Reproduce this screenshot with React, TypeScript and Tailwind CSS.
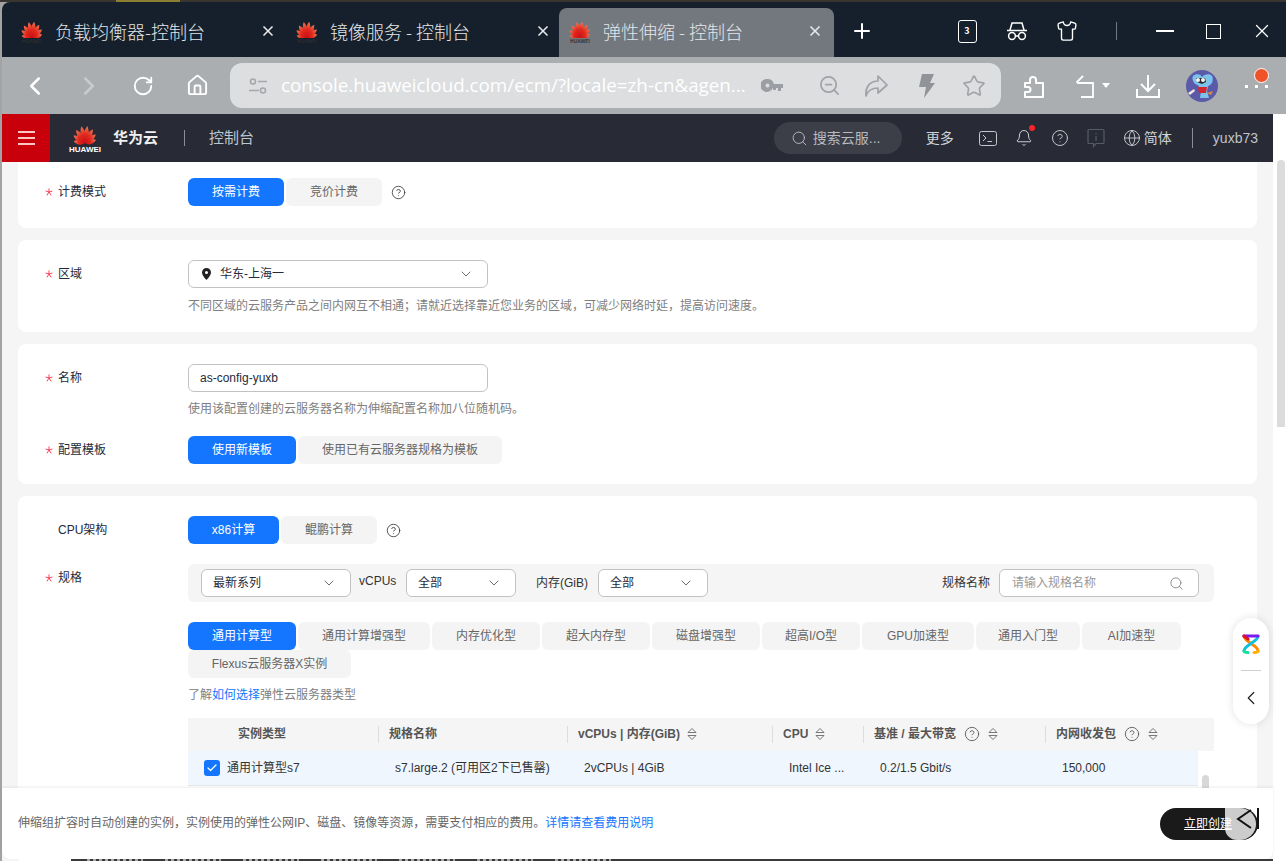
import React from "react";
import { Bell, CircleHelp, ChevronDown, ChevronLeft, ChevronRight, Globe, Home, Plus, RotateCw, Search, Shirt, Star, X, ZoomOut, Check } from "lucide-react";

// [angle, length scale] of each petal, outer ones are shorter
const PETALS: [number, number][] = [
  [-78, 0.76],
  [-54, 0.92],
  [-32, 1.05],
  [-10, 1.14],
  [10, 1.14],
  [32, 1.05],
  [54, 0.92],
  [78, 0.76],
];

function HuaweiMark({ size = 24, wordClass }: { size?: number; wordClass: string }) {
  return (
    <div className="flex flex-col items-center shrink-0">
      <svg width={size} height={size * 0.85} viewBox="-13 -18 26 22">
        <defs>
          <linearGradient id="petal" x1="0" y1="0" x2="0" y2="1">
            <stop offset="0" stopColor="#f47a55" />
            <stop offset="0.5" stopColor="#e0281e" />
            <stop offset="1" stopColor="#c90f12" />
          </linearGradient>
        </defs>
        {PETALS.map(([a, s]) => (
          <path
            key={a}
            d="M0 0C-3.800 -5 -3.600 -10 -.6 -15C2.600 -10 3.800 -5 0 0Z"
            fill="url(#petal)"
            transform={`translate(0 3) rotate(${a}) scale(1 ${s})`}
          />
        ))}
      </svg>
      <span className={wordClass}>HUAWEI</span>
    </div>
  );
}

function BrowserTab({ title, active, width, left, right }: { title: string; active?: boolean; width: string; left: string; right: string }) {
  return (
    <div className={`${width} ${left} h-full flex items-center pb-[3px] shrink-0 ${active ? "bg-[#73787f] rounded-t-[8px]" : ""}`}>
      <HuaweiMark size={24} wordClass={`text-[5px] leading-[6px] font-bold ${active ? "text-[#33363a]" : "text-[#2a2d31]"}`} />
      <span className="ml-[11px] text-[18px] text-[#e3e6e9] whitespace-pre flex-1">{title}</span>
      <X size={16} strokeWidth={2.5} className={`text-[#e8eaec] ${right}`} />
    </div>
  );
}

function Seg({ children, on, width }: { children: React.ReactNode; on?: boolean; width: string }) {
  return (
    <div className={`${width} h-[28px] flex items-center justify-center rounded-[6px] text-[12px] shrink-0 ${on ? "bg-[#1476ff] text-white" : "bg-[#f4f4f4] text-[#666666]"}`}>
      {children}
    </div>
  );
}

function FieldLabel({ text, star = true }: { text: string; star?: boolean }) {
  return (
    <div className="w-[170px] pl-[27px] shrink-0 flex items-center text-[12px] text-[#252b3a] h-[28px]">
      <span className="w-[13px] flex items-center">
        {star && (
          <svg width="8" height="8" viewBox="0 0 8 8" fill="none" stroke="#f0334a" strokeWidth="0.9">
            <path d="M4 .4V4M4 4L.6 3M4 4l3.400-1M4 4L1.900 7.400M4 4l2.100 3.400" />
          </svg>
        )}
      </span>
      {text}
    </div>
  );
}

function Sel({ text, width }: { text: string; width: string }) {
  return (
    <div className={`${width} h-[28px] bg-white border border-[#c2c2c2] rounded-[6px] flex items-center justify-between pl-[11px] pr-[13px] text-[12px] text-[#252b3a] shrink-0`}>
      <span>{text}</span>
      <ChevronDown size={16} strokeWidth={1.3} className="text-[#555555]" />
    </div>
  );
}

function Help({ size = 15, color = "text-[#333333]" }: { size?: number; color?: string }) {
  return <CircleHelp size={size} strokeWidth={1.3} className={`${color} shrink-0`} />;
}

function SortIcon() {
  return (
    <svg width="10" height="14" viewBox="0 0 10 14" className="shrink-0" fill="none" stroke="#777777" strokeWidth="1">
      <path d="M5 1.500L9 5.500H1Z" />
      <path d="M5 12.500L9 8.500H1Z" />
    </svg>
  );
}

function HeadCell({ children, width, pad = "pl-[11px]", sep = true }: { children: React.ReactNode; width: string; pad?: string; sep?: boolean }) {
  return (
    <div className={`${width} ${pad} h-full relative flex items-center pb-[1px] shrink-0 font-bold text-[12px] text-[#555555]`}>
      {sep && <span className="absolute left-0 top-[8px] bottom-[8px] w-px bg-[#dddddd]" />}
      {children}
    </div>
  );
}

function RowCell({ children, width }: { children: React.ReactNode; width: string }) {
  return <div className={`${width} pl-[17px] shrink-0 whitespace-pre`}>{children}</div>;
}

function Incognito() {
  return (
    <svg width="22" height="20" viewBox="0 0 22 20" fill="none" stroke="#fff" strokeWidth="1.5">
      <path d="M1 9.500h20M4 9l2-7h10l2 7" />
      <circle cx="6" cy="15" r="3.400" />
      <circle cx="16" cy="15" r="3.400" />
      <path d="M9.400 15h3.200" />
    </svg>
  );
}

function Avatar() {
  return (
    <svg width="32" height="32" viewBox="0 0 32 32" className="shrink-0">
      <circle cx="16" cy="16" r="16" fill="#5a5aa8" />
      <path d="M7 6c3-3 8-2 9 1 2-3 8-4 10-1 2 4 0 9-4 10l-1 5 2 7h-9l1-7-3-6C9 15 5 10 7 6Z" fill="#7cc3ec" />
      <path d="M10 8h9l1 4-4 2-5-2Z" fill="#2b2b33" />
      <circle cx="12" cy="10" r="2" fill="#f2f2f2" />
      <circle cx="17" cy="10" r="2" fill="#f2f2f2" />
      <path d="M12 17h9l-1 6h-7Z" fill="#d8262c" />
      <path d="M2 23l6-4 1 2-5 4Z" fill="#f1e7e0" />
      <path d="M21 23l6-2-2 4Z" fill="#e58a2a" />
    </svg>
  );
}

function ServiceLogo() {
  return (
    <svg width="18" height="20" viewBox="0 0 18 20" fill="none" strokeWidth="3" strokeLinecap="round">
      <path d="M2 2c0 6 14 9 14 15" stroke="#ff8a00" />
      <path d="M16 2c0 6-14 9-14 15" stroke="#10c0e0" />
      <path d="M2 2h14" stroke="#7a1cf0" />
      <path d="M2 2l4 3" stroke="#e0102f" />
      <path d="M2 17c0 1 1 1.500 4 1.500" stroke="#10e0a0" />
      <path d="M16 17c0 1-1 1.500-4 1.500" stroke="#ffb000" />
    </svg>
  );
}

const TYPES: [string, string][] = [
  ["通用计算型", "w-[108px]"],
  ["通用计算增强型", "w-[132px]"],
  ["内存优化型", "w-[108px]"],
  ["超大内存型", "w-[108px]"],
  ["磁盘增强型", "w-[108px]"],
  ["超高I/O型", "w-[98px]"],
  ["GPU加速型", "w-[112px]"],
  ["通用入门型", "w-[104px]"],
  ["AI加速型", "w-[99px]"],
  ["Flexus云服务器X实例", "w-[163px]"],
];

export default function App() {
  return (
    <div className="w-[1286px] h-[861px] relative overflow-hidden flex flex-col bg-[#a3a3a3] [font-family:'Liberation_Sans','Noto_Sans_CJK_SC',sans-serif]">
      <div className="h-[2px] bg-[#3a3530] shrink-0 flex">
        <span className="ml-[116px] w-[64px] bg-[#8a8030]" />
      </div>

      <div className="flex-1 min-h-0 ml-[2px] flex flex-col">
        {/* tabs */}
        <div className="h-[55px] bg-[#15202c] rounded-tl-[8px] pt-[6px] flex items-stretch shrink-0 [font-family:'Noto_Sans_CJK_SC',sans-serif] font-light">
          <BrowserTab title="负载均衡器-控制台" width="w-[275px]" left="pl-[18px]" right="mr-[1px]" />
          <BrowserTab title="镜像服务 - 控制台" width="w-[282px]" left="pl-[18px]" right="mr-[8px]" />
          <BrowserTab title="弹性伸缩 - 控制台" active width="w-[275px]" left="pl-[9px]" right="mr-[11px]" />
          <div className="w-[55px] flex items-center justify-center pb-[3px]">
            <Plus size={24} strokeWidth={2} className="text-white" />
          </div>
          <div className="ml-auto flex items-center text-white pb-[3px]">
            <div className="w-[50px] flex justify-center">
              <div className="w-[19px] h-[23px] border-[1.5px] border-white rounded-[3px] flex items-center justify-center text-[9px] font-bold">3</div>
            </div>
            <div className="w-[50px] flex justify-center"><Incognito /></div>
            <div className="w-[50px] flex justify-center"><Shirt size={22} strokeWidth={1.5} /></div>
            <div className="w-[48px] flex justify-center"><div className="w-px h-[18px] bg-[#707780]" /></div>
            <div className="w-[49px] flex justify-center"><div className="w-[18px] h-[1.5px] bg-white" /></div>
            <div className="w-[49px] flex justify-center"><div className="w-[15px] h-[15px] border-[1.5px] border-white" /></div>
            <div className="w-[48px] flex justify-center"><X size={22} strokeWidth={1.4} /></div>
          </div>
        </div>

        {/* toolbar */}
        <div className="h-[57px] bg-[#abaeb1] flex items-center shrink-0 text-white pl-[6px]">
          <div className="w-[54px] flex justify-center"><ChevronLeft size={30} strokeWidth={2} /></div>
          <div className="w-[54px] flex justify-center"><ChevronRight size={30} strokeWidth={2} className="text-[#c8cacc]" /></div>
          <div className="w-[54px] flex justify-center"><RotateCw size={22} strokeWidth={2} /></div>
          <div className="w-[54px] flex justify-center"><Home size={23} strokeWidth={2} /></div>
          <div className="ml-[6px] w-[771px] h-[45px] rounded-[12px] bg-[#dcdee0] flex items-center pl-[18px] shrink-0">
            <svg width="20" height="18" viewBox="0 0 20 18" fill="none" stroke="#a4a7ab" strokeWidth="1.600" className="shrink-0">
              <circle cx="5" cy="4.500" r="2.500" />
              <path d="M10 4.500h9M1 13.500h10" />
              <circle cx="15" cy="13.500" r="2.500" />
            </svg>
            <span className="ml-[13px] w-[467px] shrink-0 text-[18.8px] text-white whitespace-pre [font-family:'Open_Sans',sans-serif]">console.huaweicloud.com/ecm/?locale=zh-cn&agen...</span>
            <div className="w-[48px] flex justify-center">
              <svg width="22" height="14" viewBox="0 0 22 14" fill="#9b9ea2">
                <path d="M6.500 0a6.500 6.500 0 0 1 6.300 5H22v4h-2v3h-3V9h-2v2h-3V9h-.2A6.500 6.500 0 1 1 6.500 0Zm0 4.500a2 2 0 1 0 0 4 2 2 0 0 0 0-4Z" />
              </svg>
            </div>
            <div className="w-[66px] flex justify-center"><ZoomOut size={23} strokeWidth={1.8} className="text-[#a0a3a7]" /></div>
            <div className="w-[28px] flex justify-center">
              <svg width="24" height="22" viewBox="0 0 24 22" fill="none" stroke="#a0a3a7" strokeWidth="1.700" strokeLinejoin="round">
                <path d="M14 1l9 9-9 8v-5C8 13 4 15 2 21 1 12 6 6 14 6Z" />
              </svg>
            </div>
            <div className="w-[72px] flex justify-center">
              <svg width="18" height="24" viewBox="0 0 18 24" fill="#909397">
                <path d="M5 0h12l-4 9h5L7 24l2-11H2Z" />
              </svg>
            </div>
            <div className="w-[24px] flex justify-center"><Star size={24} strokeWidth={1.6} className="text-[#a0a3a7]" /></div>
          </div>
          <div className="w-[66px] flex justify-center">
            <svg width="22" height="24" viewBox="0 0 22 24" fill="none" stroke="#fff" strokeWidth="2" strokeLinejoin="round">
              <path d="M2 9h5V6a3 3 0 0 1 6 0v3h7v14H2v-5h3a2.500 2.500 0 0 0 0-5H2Z" />
            </svg>
          </div>
          <div className="w-[38px] flex justify-center">
            <svg width="22" height="24" viewBox="0 0 22 24" fill="none" stroke="#fff" strokeWidth="1.800">
              <path d="M8 2L2 8l1 1h15v14H6" />
            </svg>
          </div>
          <div className="w-0 h-0 border-x-[4px] border-x-transparent border-t-[5px] border-t-white box-content -ml-[3px]" />
          <div className="w-[76px] flex justify-center">
            <svg width="26" height="24" viewBox="0 0 26 24" fill="none" stroke="#fff" strokeWidth="2">
              <path d="M13 1v15M6 10l7 7 7-7M2 15v8h22v-8" />
            </svg>
          </div>
          <Avatar />
          <div className="relative flex items-center ml-[27px] gap-[7px] pt-[2px]">
            <span className="w-[3px] h-[3px] bg-white" />
            <span className="w-[3px] h-[3px] bg-white" />
            <span className="w-[3px] h-[3px] bg-white" />
            <span className="absolute left-[9px] -top-[15px] w-[15px] h-[15px] rounded-full bg-[#f0522a] border border-white" />
          </div>
        </div>

        {/* page */}
        <div className="flex-1 min-h-0 flex">
          <div className="w-[1271px] shrink-0 flex flex-col">
            {/* console nav */}
            <div className="h-[48px] bg-[#282b35] flex items-center shrink-0">
              <div className="w-[48px] h-full bg-[#c7000b] flex flex-col items-center justify-center gap-[4px]">
                <span className="w-[17px] h-[2px] bg-[#ffc4c4]" />
                <span className="w-[17px] h-[2px] bg-[#ffc4c4]" />
                <span className="w-[17px] h-[2px] bg-[#ffc4c4]" />
              </div>
              <div className="ml-[20px] w-[30px] flex justify-center">
                <HuaweiMark size={26} wordClass="text-[8px] leading-[9px] text-white font-bold" />
              </div>
              <span className="ml-[13px] text-[15px] font-bold text-[#f0f0f0]">华为云</span>
              <div className="ml-[26px] w-px h-[16px] bg-[#8a8e96]" />
              <span className="ml-[24px] text-[15px] text-[#bcc6d0]">控制台</span>
              <div className="ml-auto flex items-center text-[#d0d3d8]">
                <div className="w-[128px] h-[32px] rounded-full bg-[#3c3f48] flex items-center pl-[17px] text-[14px] text-[#b8bbc0] gap-[5px]">
                  <Search size={17} strokeWidth={1.300} />
                  <span>搜索云服...</span>
                </div>
                <span className="ml-[24px] text-[14px]">更多</span>
                <svg width="18" height="15" viewBox="0 0 18 15" fill="none" stroke="#c4c7cc" strokeWidth="1" className="ml-[25px]">
                  <rect x=".5" y=".5" width="17" height="14" rx="2" />
                  <path d="M4 4l3 3-3 3M8.500 10.500h4.500" />
                </svg>
                <div className="ml-[18px] relative">
                  <Bell size={18} strokeWidth={1.300} />
                  <span className="absolute right-[-2px] top-[-4px] w-[6px] h-[6px] rounded-full bg-[#f4232c]" />
                </div>
                <div className="ml-[18px]"><Help size={18} color="text-[#c4c7cc]" /></div>
                <div className="ml-[18px]">
                  <svg width="18" height="20" viewBox="0 0 18 20" fill="none" stroke="#565a63" strokeWidth="1.200">
                    <path d="M2 1.500h14a1 1 0 0 1 1 1v12a1 1 0 0 1-1 1H9l-2.500 3v-3H2a1 1 0 0 1-1-1v-12a1 1 0 0 1 1-1Z" />
                    <path d="M9 5v1.200M9 8v5" />
                  </svg>
                </div>
                <div className="ml-[18px]"><Globe size={18} strokeWidth={1.200} /></div>
                <span className="ml-[3px] text-[14px]">简体</span>
                <div className="ml-[20px] w-px h-[20px] bg-[#8a8e96]" />
                <span className="ml-[20px] mr-[15px] text-[14px] text-[#c0c3c8]">yuxb73</span>
              </div>
            </div>

            {/* form */}
            <div className="flex-1 min-h-0 bg-[#f5f5f5] px-[16px] flex flex-col gap-[12px] overflow-hidden">
              <div className="bg-white rounded-b-[8px] h-[66px] pt-[16px] flex items-start shrink-0">
                <FieldLabel text="计费模式" />
                <div className="flex items-center gap-[2px]">
                  <Seg on width="w-[96px]">按需计费</Seg>
                  <Seg width="w-[96px]">竞价计费</Seg>
                  <div className="ml-[7px]"><Help /></div>
                </div>
              </div>

              <div className="bg-white rounded-[8px] h-[92px] pt-[20px] flex shrink-0">
                <FieldLabel text="区域" />
                <div className="flex flex-col">
                  <div className="w-[300px] h-[28px] border border-[#c2c2c2] rounded-[6px] flex items-center pl-[13px] pr-[13px] text-[12px] text-[#252b3a]">
                    <svg width="9" height="12" viewBox="0 0 9 12" fill="#222222">
                      <path d="M4.500 0A4.500 4.500 0 0 1 9 4.500C9 7.500 4.500 12 4.500 12S0 7.500 0 4.500A4.500 4.500 0 0 1 4.500 0Zm0 3a1.500 1.500 0 1 0 0 3 1.500 1.500 0 0 0 0-3Z" />
                    </svg>
                    <span className="ml-[9px]">华东-上海一</span>
                    <ChevronDown size={16} strokeWidth={1.300} className="ml-auto text-[#555555]" />
                  </div>
                  <p className="mt-[9px] pt-[1px] text-[12px] leading-[16px] text-[#808080]">不同区域的云服务产品之间内网互不相通；请就近选择靠近您业务的区域，可减少网络时延，提高访问速度。</p>
                </div>
              </div>

              <div className="bg-white rounded-[8px] h-[140px] pt-[20px] flex flex-col shrink-0">
                <div className="flex">
                  <FieldLabel text="名称" />
                  <div className="flex flex-col">
                    <div className="w-[300px] h-[28px] border border-[#c2c2c2] rounded-[6px] flex items-center pl-[11px] text-[12px] text-[#252b3a]">as-config-yuxb</div>
                    <p className="mt-[9px] text-[12px] leading-[16px] text-[#808080]">使用该配置创建的云服务器名称为伸缩配置名称加八位随机码。</p>
                  </div>
                </div>
                <div className="flex mt-[19px]">
                  <FieldLabel text="配置模板" />
                  <div className="flex gap-[2px]">
                    <Seg on width="w-[108px]">使用新模板</Seg>
                    <Seg width="w-[204px]">使用已有云服务器规格为模板</Seg>
                  </div>
                </div>
              </div>

              <div className="bg-white rounded-t-[8px] pt-[20px] flex-1 flex flex-col min-h-0">
                <div className="flex">
                  <FieldLabel text="CPU架构" star={false} />
                  <div className="flex items-center gap-[2px]">
                    <Seg on width="w-[91px]">x86计算</Seg>
                    <Seg width="w-[96px]">鲲鹏计算</Seg>
                    <div className="ml-[7px]"><Help /></div>
                  </div>
                </div>
                <div className="flex mt-[20px]">
                  <FieldLabel text="规格" />
                  <div className="w-[1026px] flex flex-col">
                    <div className="h-[38px] bg-[#f5f5f5] rounded-[6px] pl-[13px] pr-[15px] pt-[5px] flex items-start text-[12px] text-[#333333]">
                      <Sel text="最新系列" width="w-[150px]" />
                      <span className="ml-[8px] w-[47px] leading-[24px]">vCPUs</span>
                      <Sel text="全部" width="w-[110px]" />
                      <span className="ml-[20px] w-[42px] leading-[28px] whitespace-pre">内存(GiB)</span>
                      <div className="ml-[20px]"><Sel text="全部" width="w-[110px]" /></div>
                      <span className="ml-auto mr-[9px] leading-[28px]">规格名称</span>
                      <div className="w-[200px] h-[28px] bg-white border border-[#c2c2c2] rounded-[6px] flex items-center justify-between pl-[12px] pr-[14px] text-[#999999]">
                        <span>请输入规格名称</span>
                        <Search size={15} strokeWidth={1.300} className="text-[#777777]" />
                      </div>
                    </div>

                    <div className="mt-[20px] flex flex-wrap gap-x-[2px]">
                      {TYPES.map(([name, w], i) => (
                        <Seg key={name} on={i === 0} width={w}>{name}</Seg>
                      ))}
                    </div>

                    <p className="mt-[9px] text-[12px] leading-[16px] text-[#808080]">了解<span className="text-[#1476ff]">如何选择</span>弹性云服务器类型</p>

                    <div className="mt-[15px] relative">
                      <div className="h-[33px] bg-[#f5f5f5] flex">
                        <HeadCell width="w-[190px]" pad="pl-[50px]" sep={false}>实例类型</HeadCell>
                        <HeadCell width="w-[189px]">规格名称</HeadCell>
                        <HeadCell width="w-[205px]">vCPUs | 内存(GiB)<span className="ml-[7px]"><SortIcon /></span></HeadCell>
                        <HeadCell width="w-[91px]">CPU<span className="ml-[7px]"><SortIcon /></span></HeadCell>
                        <HeadCell width="w-[182px]">基准 / 最大带宽<span className="mx-[8px]"><Help size={16} color="text-[#555555]" /></span><SortIcon /></HeadCell>
                        <HeadCell width="w-[169px]">内网收发包<span className="mx-[8px]"><Help size={16} color="text-[#555555]" /></span><SortIcon /></HeadCell>
                      </div>
                      <div className="w-[1010px] h-[35px] bg-[#eff6fe] border-b border-[#e8e8e8] flex items-center text-[12px] text-[#333333]">
                        <div className="w-[190px] pl-[16px] shrink-0 flex items-center gap-[7px]">
                          <span className="w-[16px] h-[16px] rounded-[3px] bg-[#1476ff] flex items-center justify-center">
                            <Check size={12} strokeWidth={2.500} className="text-white" />
                          </span>
                          通用计算型s7
                        </div>
                        <RowCell width="w-[189px]">s7.large.2 (可用区2下已售罄)</RowCell>
                        <RowCell width="w-[205px]">2vCPUs | 4GiB</RowCell>
                        <RowCell width="w-[91px]">Intel Ice ...</RowCell>
                        <RowCell width="w-[182px]">0.2/1.5 Gbit/s</RowCell>
                        <RowCell width="w-[143px]">150,000</RowCell>
                      </div>
                      <span className="absolute left-[1014px] top-[57px] w-[7px] h-[20px] rounded-full bg-[#d8d8d8]" />
                    </div>
                  </div>
                </div>
              </div>
            </div>
          </div>

          <div className="w-[13px] bg-white shrink-0 relative">
            <span className="absolute left-[4px] top-[46px] w-[8px] h-[267px] rounded-t-full rounded-b-[3px] bg-[#dcdcdc]" />
          </div>
        </div>
      </div>

      {/* floating helper */}
      <div className="absolute left-[1233px] top-[618px] w-[36px] h-[106px] rounded-full bg-white shadow-[0_0_8px_rgba(0,0,0,0.12)] flex flex-col items-center pt-[16px]">
        <ServiceLogo />
        <div className="mt-[16px] w-[20px] h-px bg-[#d0d0d0]" />
        <ChevronLeft size={22} strokeWidth={1.300} className="mt-[16px] text-[#222222]" />
      </div>

      {/* page behind the window, a sliver shows below the footer */}
      <div className="absolute left-[71px] top-[859px] w-[1202px] h-[2px] bg-[#3a3a3a] flex gap-[22px] pl-[16px]">
        {[0, 1, 2, 3, 4, 5, 6].map((i) => (
          <span key={i} className="w-[56px] h-[2px] bg-[repeating-linear-gradient(90deg,#a8a8a8_0,#a8a8a8_3px,transparent_3px,transparent_6px)]" />
        ))}
      </div>

      {/* fixed footer of the page */}
      <div className="absolute left-[2px] top-[788px] w-[1271px] h-[71px] bg-white rounded-b-[8px] shadow-[0_-1px_3px_rgba(0,0,0,0.08)] flex items-center justify-between pl-[16px] pr-[15px] text-[12px] text-[#666666]">
        <p className="mt-[-1px]">伸缩组扩容时自动创建的实例，实例使用的弹性公网IP、磁盘、镜像等资源，需要支付相应的费用。<span className="text-[#1476ff]">详情请查看费用说明</span></p>
        <div className="relative w-[98px] h-[32px] rounded-full bg-[#1a1a1a] text-white flex items-center pl-[24px]">
          <span className="absolute left-[65px] top-0 w-[31px] h-[32px] rounded-bl-[12px] rounded-r-[16px] bg-[#cccccc]" />
          <span className="relative underline">立即创建</span>
        </div>
        <svg width="24" height="24" viewBox="0 0 24 24" className="absolute left-[1234px] top-[20px]" fill="none" stroke="#111111" strokeWidth="2">
          <path d="M15 2L2 11l13 9M22 0v21" />
        </svg>
      </div>
    </div>
  );
}
